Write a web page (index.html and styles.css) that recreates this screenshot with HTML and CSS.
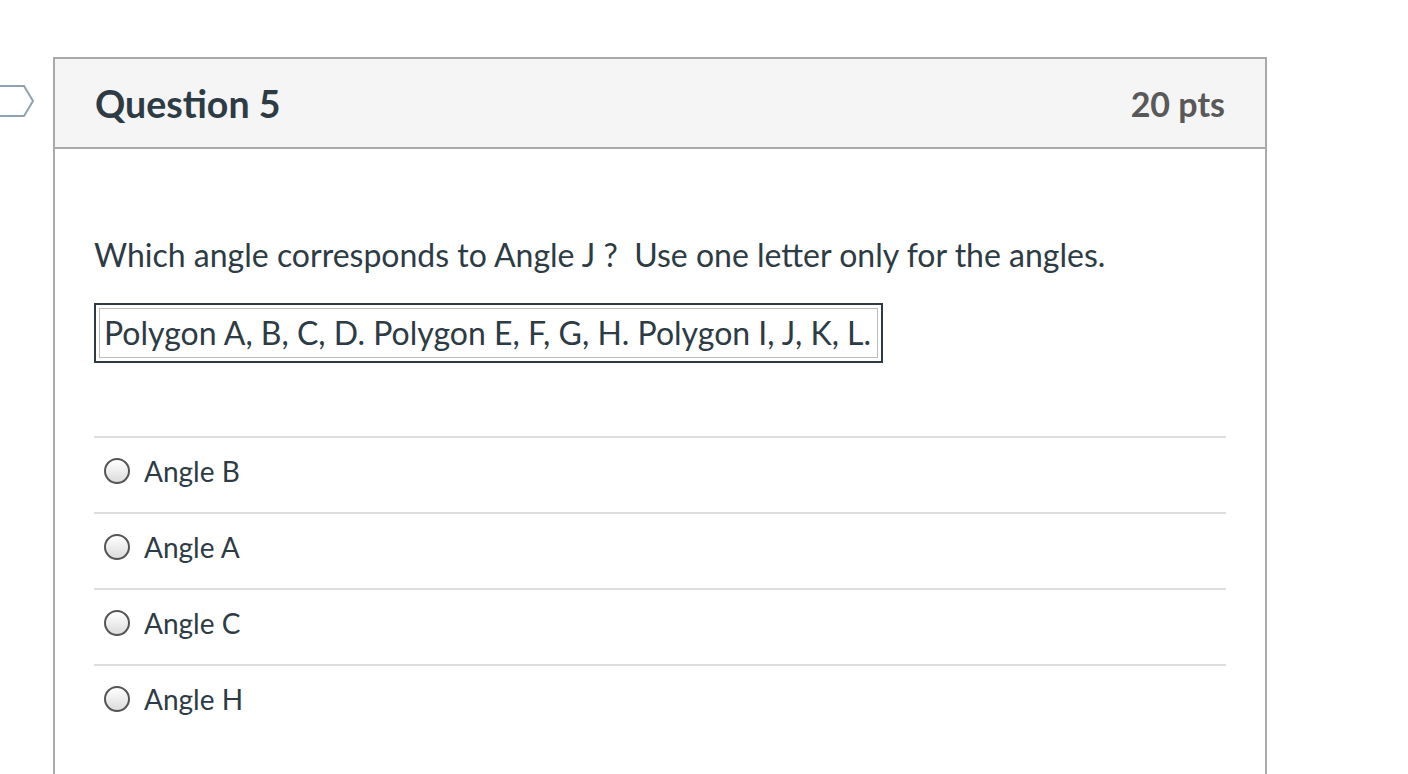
FILE: index.html
```html
<!DOCTYPE html>
<html>
<head>
<meta charset="utf-8">
<link rel="stylesheet" href="styles.css">
</head>
<body>
<div class="page">
  <svg class="flag" width="36" height="34" viewBox="0 0 36 34">
    <path d="M-10 2 H24 L33 17 L24 32 H-10" fill="none" stroke="#8ea2b1" stroke-width="2"/>
  </svg>
  <div class="card">
    <div class="header">
      <h2 class="title">Question 5</h2>
      <div class="pts">20 pts</div>
    </div>
    <div class="body">
      <p class="question">Which angle corresponds to Angle J ?&nbsp; Use one letter only for the angles.</p>
      <div class="figure"><div class="figure-inner">Polygon A, B, C, D. Polygon E, F, G, H. Polygon I, J, K, L.</div></div>
      <div class="answers">
        <div class="answer"><span class="radio"></span><span class="label">Angle B</span></div>
        <div class="answer"><span class="radio"></span><span class="label">Angle A</span></div>
        <div class="answer"><span class="radio"></span><span class="label">Angle C</span></div>
        <div class="answer"><span class="radio"></span><span class="label">Angle H</span></div>
      </div>
    </div>
  </div>
</div>
</body>
</html>
```
FILE: styles.css
```css
html, body {
  margin: 0;
  padding: 0;
  background: #fff;
  font-family: Lato, "Open Sans", sans-serif;
  color: #2d3b45;
  overflow: hidden;
}
.page {
  position: relative;
  padding: 57px 0 0 53px;
  height: 774px;
  box-sizing: border-box;
  overflow: hidden;
}
.flag {
  position: absolute;
  left: 0;
  top: 84px;
}
.card {
  width: 1214px;
  box-sizing: border-box;
  border: 2px solid #a9a9a9;
  border-bottom: none;
  height: 740px;
}
.header {
  height: 90px;
  box-sizing: border-box;
  background: #f5f5f5;
  border-bottom: 2px solid #a9a9a9;
  display: flex;
  align-items: center;
  justify-content: space-between;
  padding: 0 40px;
}
.title {
  margin: 0;
  font-size: 37.5px;
  font-weight: 700;
  color: #2d3b45;
}
.pts {
  font-size: 34px;
  font-weight: 700;
  color: #595959;
}
.body {
  padding: 86px 39px 0 39px;
}
.question {
  margin: 0;
  font-size: 32px;
  line-height: 40px;
}
.figure {
  display: inline-block;
  margin-top: 28px;
  border: 2px solid #2d3b45;
  padding: 3px;
}
.figure-inner {
  border: 1px solid #bdbdbd;
  font-size: 32px;
  line-height: 48px;
  padding: 0 6px 0 4px;
}
.answers {
  margin-top: 73px;
}
.answer {
  border-top: 2px solid #dddddd;
  height: 76px;
  box-sizing: border-box;
  display: flex;
  align-items: center;
  padding-left: 10px;
  padding-bottom: 8px;
}
.radio {
  width: 22px;
  height: 22px;
  border: 2px solid #555;
  border-radius: 50%;
  background: linear-gradient(#ffffff, #dcdcdc);
  margin-right: 14px;
}
.label {
  font-size: 28px;
}
```
